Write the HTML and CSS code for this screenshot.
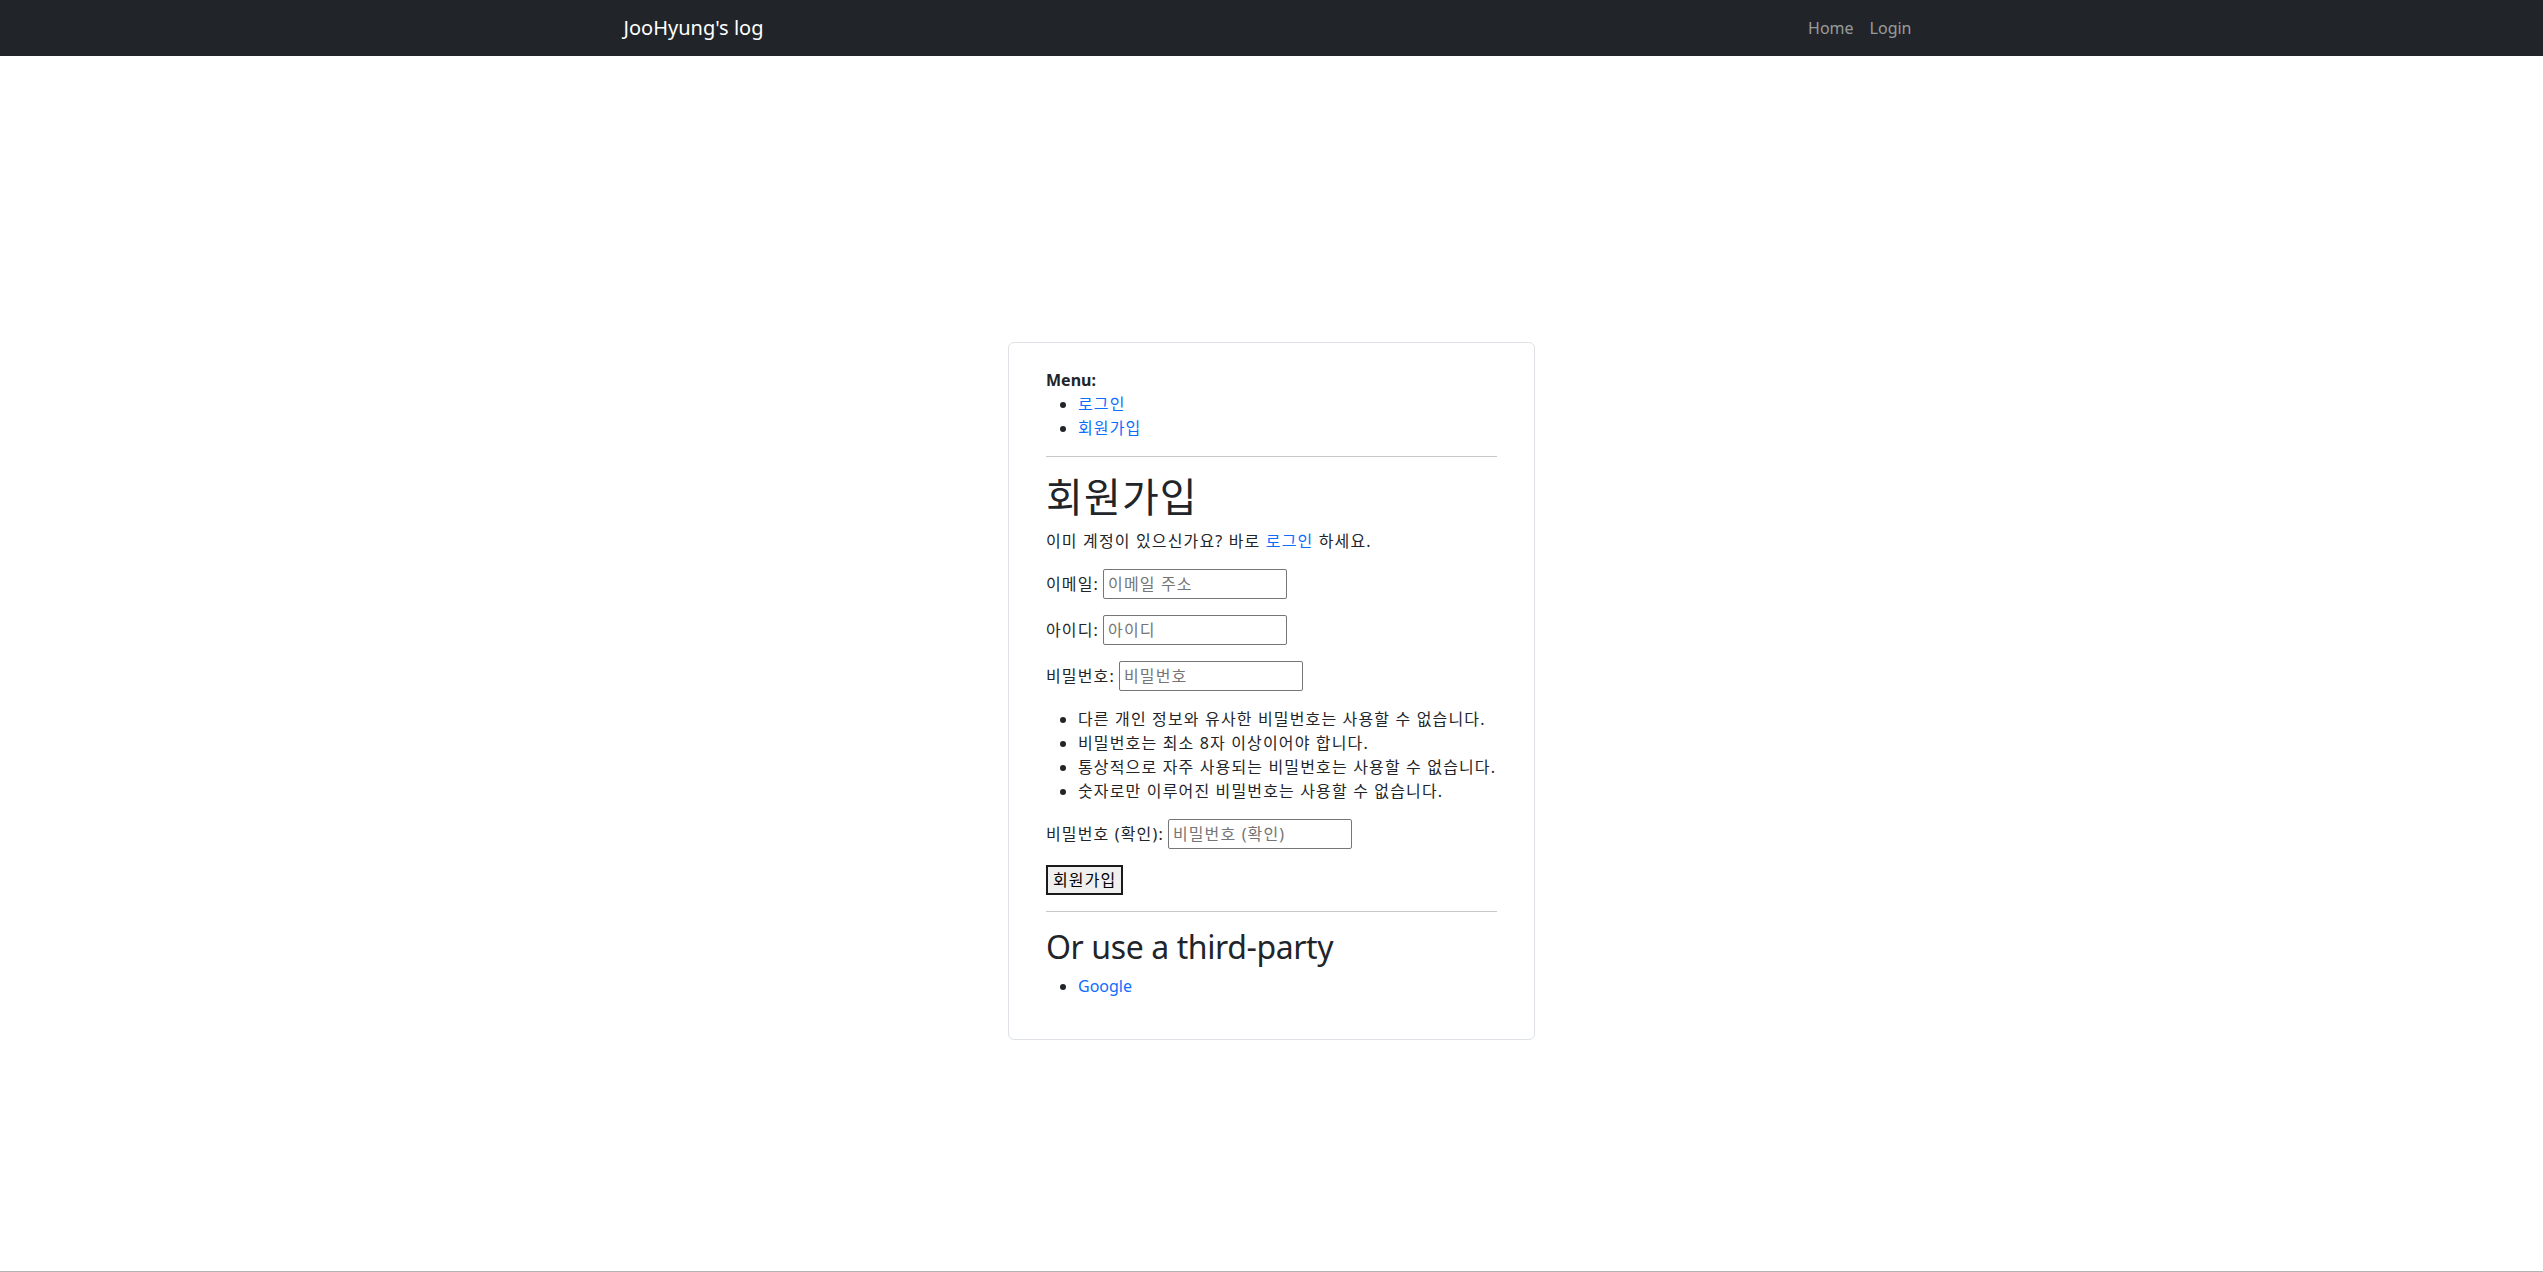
FILE: index.html
```html
<!DOCTYPE html>
<html lang="ko">
<head>
<meta charset="utf-8">
<title>JooHyung's log</title>
<link rel="stylesheet" href="styles.css">
</head>
<body>
<nav class="navbar">
  <div class="nav-inner">
    <a class="brand" href="#">JooHyung's log</a>
    <div class="nav-links">
      <a class="nav-link" href="#">Home</a>
      <a class="nav-link" href="#">Login</a>
    </div>
  </div>
</nav>
<main class="main">
  <div class="card">
    <div class="menu-title">Menu:</div>
    <ul class="list">
      <li><a href="#">로그인</a></li>
      <li><a href="#">회원가입</a></li>
    </ul>
    <hr class="rule">
    <h1 class="title">회원가입</h1>
    <p class="para">이미 계정이 있으신가요? 바로 <a href="#">로그인</a> 하세요.</p>
    <form class="form">
      <p class="row"><label>이메일:</label> <input class="field" type="email" placeholder="이메일 주소"></p>
      <p class="row"><label>아이디:</label> <input class="field" type="text" placeholder="아이디"></p>
      <p class="row"><label>비밀번호:</label> <input class="field" type="password" placeholder="비밀번호"></p>
      <ul class="list">
        <li>다른 개인 정보와 유사한 비밀번호는 사용할 수 없습니다.</li>
        <li>비밀번호는 최소 8자 이상이어야 합니다.</li>
        <li>통상적으로 자주 사용되는 비밀번호는 사용할 수 없습니다.</li>
        <li>숫자로만 이루어진 비밀번호는 사용할 수 없습니다.</li>
      </ul>
      <p class="row"><label>비밀번호 (확인):</label> <input class="field" type="password" placeholder="비밀번호 (확인)"></p>
      <button class="btn" type="button">회원가입</button>
    </form>
    <hr class="rule">
    <h2 class="subtitle">Or use a third-party</h2>
    <ul class="list">
      <li><a class="latin" href="#">Google</a></li>
    </ul>
  </div>
</main>
<footer class="footer"></footer>
</body>
</html>
```
FILE: styles.css
```css
* { box-sizing: border-box; }
html, body { margin: 0; padding: 0; }
body {
  font-family: "Noto Sans", "Noto Sans CJK KR", sans-serif;
  font-size: 16px;
  line-height: 1.5;
  color: #212529;
  background: #fff;
  height: 100vh;
  display: flex;
  flex-direction: column;
  overflow: hidden;
}
a { color: #0d6efd; text-decoration: none; }

.navbar {
  background: #212529;
  height: 56px;
  flex: none;
  display: flex;
  align-items: center;
}
.nav-inner {
  width: 1320px;
  margin: 0 auto;
  padding: 0 12px;
  display: flex;
  align-items: center;
  justify-content: space-between;
}
.brand {
  color: #fff;
  font-size: 20px;
  line-height: 30px;
  padding: 5px 0;
}
.nav-links { display: flex; }
.nav-link {
  color: rgba(255,255,255,.55);
  padding: 8px;
  font-size: 16px;
}

.main {
  flex: 1;
  display: flex;
  justify-content: center;
  align-items: flex-start;
  padding-top: 286px;
}
.card {
  width: 527px;
  border: 1px solid #dee2e6;
  border-radius: 6px;
  padding: 25px 37px 25px 37px;
  letter-spacing: 1.15px;
}
.menu-title { font-weight: 700; letter-spacing: 0; }
.latin { letter-spacing: 0; }
.list {
  margin: 0 0 16px;
  padding-left: 32px;
}
.rule {
  margin: 16px 0;
  border: 0;
  border-top: 1px solid #c8c9ca;
  height: 0;
}
.title {
  font-size: 40px;
  font-weight: 400;
  line-height: 1.2;
  margin: 0 0 8px;
}
.subtitle {
  font-size: 32px;
  font-weight: 400;
  line-height: 1.2;
  margin: 0 0 8px;
  letter-spacing: -0.4px;
}
.para { margin: 0 0 16px; }
.form { margin: 0; }
.row {
  margin: 0 0 16px;
  height: 30px;
  display: flex;
  align-items: center;
  gap: 4px;
}
.field {
  width: 184px;
  height: 30px;
  font: inherit;
  letter-spacing: inherit;
  color: #212529;
  padding: 1px 4px;
  border: 1px solid #767676;
  border-radius: 2px;
  background: #fff;
}
.field::placeholder { color: #757575; }
.btn {
  font: inherit;
  letter-spacing: inherit;
  line-height: 24px;
  height: 30px;
  padding: 1px 5px;
  border: 2px solid #1a1a1a;
  background: #efefef;
  color: #000;
  border-radius: 0;
  display: block;
}
.footer {
  flex: none;
  height: 1px;
  background: #b4b4b4;
}
```
